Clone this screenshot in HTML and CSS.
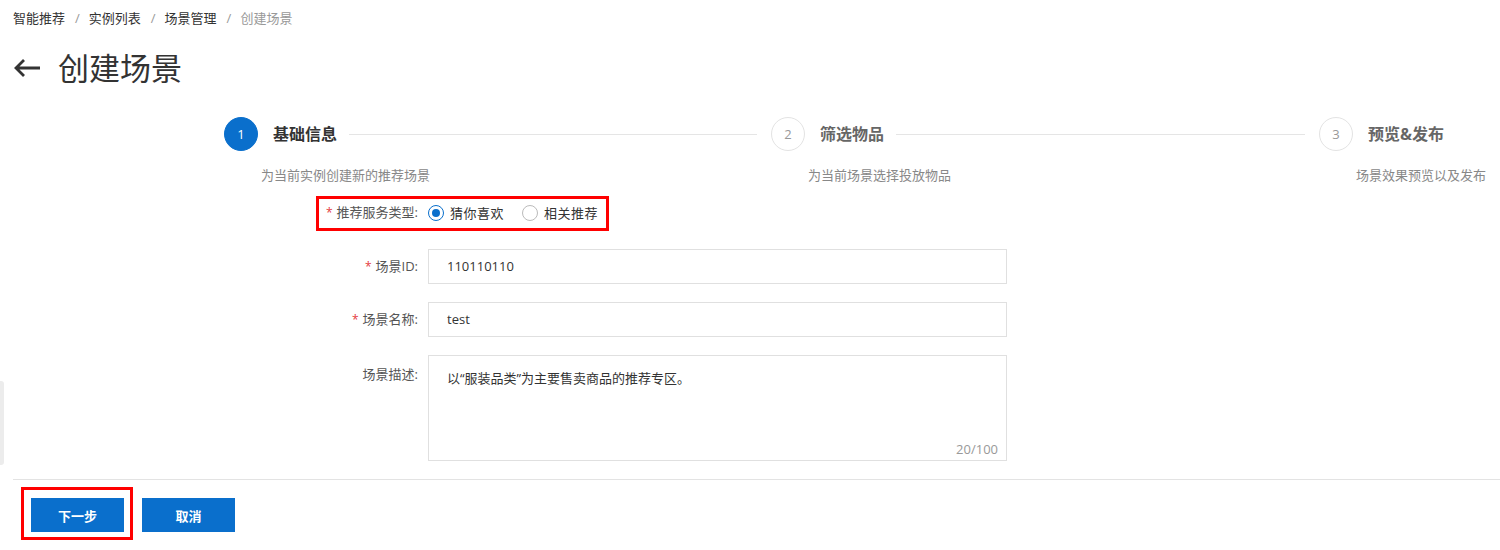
FILE: index.html
```html
<!DOCTYPE html>
<html lang="zh-CN">
<head>
<meta charset="utf-8">
<title>创建场景</title>
<link rel="stylesheet" href="styles.css">
</head>
<body>
<div class="side-tab"></div>
<div class="page">
  <nav class="breadcrumb">
    <span class="crumb">智能推荐</span><span class="sep">/</span>
    <span class="crumb">实例列表</span><span class="sep">/</span>
    <span class="crumb">场景管理</span><span class="sep">/</span>
    <span class="crumb current">创建场景</span>
  </nav>

  <h1 class="page-title">
    <svg class="back" width="28" height="20" viewBox="0 0 28 20"><path d="M27 10H3M11 2L3 10L11 18" fill="none" stroke="#333" stroke-width="2.8" stroke-linecap="butt" stroke-linejoin="miter"/></svg>
    <span>创建场景</span>
  </h1>

  <div class="steps">
    <div class="step step-1 active">
      <div class="step-head">
        <span class="circle">1</span>
        <span class="step-title">基础信息</span>
        <span class="line"></span>
      </div>
      <div class="step-desc">为当前实例创建新的推荐场景</div>
    </div>
    <div class="step step-2">
      <div class="step-head">
        <span class="circle">2</span>
        <span class="step-title">筛选物品</span>
        <span class="line"></span>
      </div>
      <div class="step-desc">为当前场景选择投放物品</div>
    </div>
    <div class="step step-3">
      <div class="step-head">
        <span class="circle">3</span>
        <span class="step-title">预览&amp;发布</span>
      </div>
      <div class="step-desc">场景效果预览以及发布</div>
    </div>
  </div>

  <form class="form">
    <div class="form-item radio-item">
      <span class="highlight"></span>
      <label class="label"><span class="req">*</span>推荐服务类型:</label>
      <div class="control radios">
        <span class="radio checked"><span class="dot"></span></span><span class="radio-text">猜你喜欢</span>
        <span class="radio"></span><span class="radio-text">相关推荐</span>
      </div>
    </div>
    <div class="form-item">
      <label class="label"><span class="req">*</span>场景ID:</label>
      <div class="control input">110110110</div>
    </div>
    <div class="form-item">
      <label class="label"><span class="req">*</span>场景名称:</label>
      <div class="control input">test</div>
    </div>
    <div class="form-item">
      <label class="label label-top">场景描述:</label>
      <div class="control textarea">
        <span class="ta-text">以“服装品类”为主要售卖商品的推荐专区。</span>
        <span class="counter">20/100</span>
      </div>
    </div>
  </form>

  <div class="footer">
    <span class="btn-wrap"><button class="btn" type="button">下一步</button></span>
    <button class="btn" type="button">取消</button>
  </div>
</div>
</body>
</html>
```

FILE: styles.css
```css
* { box-sizing: border-box; }
html, body { margin: 0; padding: 0; background: #fff; }
body {
  font-family: "Open Sans", "Noto Sans CJK SC", sans-serif;
  color: #333;
  font-size: 13px;
  width: 1500px;
  height: 550px;
  overflow: hidden;
  position: relative;
}
.side-tab {
  position: absolute;
  left: 0;
  top: 381px;
  width: 4px;
  height: 84px;
  background: #ececec;
  border-radius: 0 3px 3px 0;
}
.page { padding: 8px 0 0 13px; }

.breadcrumb { display: flex; align-items: center; height: 20px; line-height: 20px; font-size: 13px; color: #333; }
.breadcrumb .sep { color: #999; padding: 0 9px 0 10px; }
.breadcrumb .current { color: #999; }

.page-title {
  margin: 20px 0 0 0;
  height: 40px;
  display: flex;
  align-items: center;
  font-size: 31px;
  font-weight: normal;
  color: #333;
  line-height: 40px;
}
.page-title .back { margin-right: 17px; display: block; }

.steps { display: flex; margin: 29px 0 0 211px; }
.step-1 { width: 547px; }
.step-2 { width: 548px; }
.step-3 { flex: 1; }
.step-head { display: flex; align-items: center; height: 34px; }
.circle {
  width: 34px; height: 34px; border-radius: 50%;
  border: 1px solid #e3e3e3;
  display: flex; align-items: center; justify-content: center;
  color: #999; font-size: 13px; flex: none; background: #fff;
}
.step.active .circle { background: #0a6fcc; border-color: #0a6fcc; color: #fff; }
.step-title { margin-left: 15px; font-size: 16px; font-weight: bold; color: #666; white-space: nowrap; line-height: 20px; }
.step.active .step-title { color: #333; }
.line { flex: 1; height: 1px; background: #e5e5e5; margin: 0 14px 0 12px; }
.step-desc { margin: 14px 0 0 37px; font-size: 13px; line-height: 20px; color: #888; white-space: nowrap; }

.form { margin: 10px 0 0 215px; display: flex; flex-direction: column; gap: 18px; }
.form-item { display: flex; position: relative; }
.label {
  width: 200px; padding-right: 10px; text-align: right;
  font-size: 13px; color: #555; line-height: 35px; white-space: nowrap;
}
.label-top { line-height: 20px; padding-top: 9px; }
.req { color: #e4393c; margin-right: 4px; font-size: 12px; }
.control { width: 579px; }
.radio-item { height: 36px; }
.radios { display: flex; align-items: center; line-height: 36px; }
.radio {
  width: 16px; height: 16px; border-radius: 50%; border: 1px solid #bbb;
  display: flex; align-items: center; justify-content: center; flex: none;
}
.radio.checked { border-color: #0a6fcc; border-width: 1.5px; }
.radio .dot { width: 8px; height: 8px; border-radius: 50%; background: #0a6fcc; }
.radio-text { margin-left: 6px; margin-right: 18px; color: #333; font-size: 13px; letter-spacing: 0.5px; }
.highlight {
  position: absolute; left: 88px; top: 1px; width: 293px; height: 35px;
  border: 3px solid #f00; pointer-events: none;
}
.input {
  height: 35px; border: 1px solid #e0e0e0; padding: 0 18px;
  line-height: 33px; font-size: 13px; color: #333;
}
.textarea {
  height: 106px; border: 1px solid #e0e0e0; padding: 12px 18px;
  position: relative; font-size: 13px; color: #333; line-height: 20px;
}
.counter { position: absolute; right: 8px; bottom: 1px; color: #999; font-size: 13px; line-height: 20px; }

.footer {
  margin-top: 18px; border-top: 1px solid #e3e3e3; padding: 18px 0 0 18px;
  display: flex; gap: 18px;
}
.btn-wrap { position: relative; display: block; }
.btn-wrap::after {
  content: ""; position: absolute; left: -10px; top: -11px; right: -9px; bottom: -8px;
  border: 3px solid #f00;
}
.btn {
  display: block; width: 93px; height: 34px; border: none; background: #0a6fcc; color: #fff;
  font-family: "Open Sans", "Noto Sans CJK SC", sans-serif; font-size: 13px; font-weight: bold;
  padding: 0; margin: 0; cursor: pointer;
}
```
